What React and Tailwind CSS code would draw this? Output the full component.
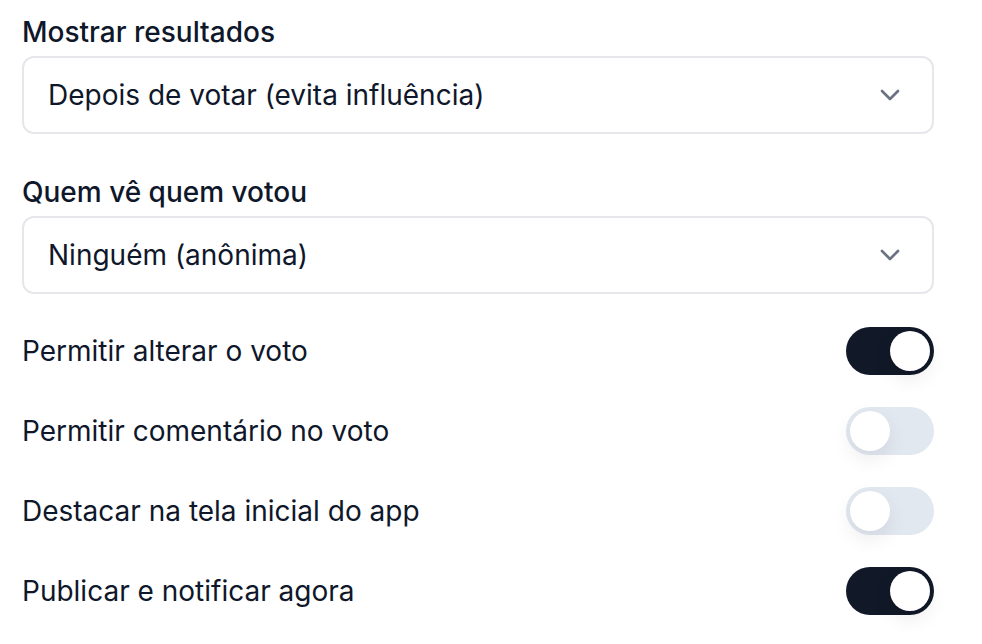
import React from "react";

function Chevron() {
  return (
    <svg width="32" height="32" viewBox="0 0 24 24" fill="none" stroke="#6b7280" strokeWidth="2" strokeLinecap="round" strokeLinejoin="round">
      <path d="m6 9 6 6 6-6" />
    </svg>
  );
}

function Select({ label, value }) {
  return (
    <div className="flex flex-col">
      <div className="text-[28px] leading-[40px] font-medium text-[#0f172a]">{label}</div>
      <div className="mt-[4px] h-[78px] flex items-center justify-between rounded-[12px] border-2 border-[#e5e7eb] pl-[24px] pr-[26px] bg-white">
        <span className="text-[28px] text-[#0f172a]">{value}</span>
        <Chevron />
      </div>
    </div>
  );
}

function Toggle({ on, label }) {
  return (
    <div className="flex items-center justify-between h-[48px]">
      <span className="text-[28px] text-[#0f172a]">{label}</span>
      <div className={"w-[88px] h-[48px] rounded-full p-[4px] flex items-center " + (on ? "bg-[#111827] justify-end" : "bg-[#e2e8f0] justify-start")}>
        <div className="w-[40px] h-[40px] rounded-full bg-white shadow-[0_8px_20px_rgba(0,0,0,0.08)]" />
      </div>
    </div>
  );
}

export default function App() {
  return (
    <div className="w-[982px] h-[644px] bg-white pl-[22px] pr-[48px] pt-[12px]" style={{ fontFamily: "Inter, 'Noto Sans', sans-serif" }}>
      <Select label="Mostrar resultados" value="Depois de votar (evita influência)" />
      <div className="mt-[38px]">
        <Select label="Quem vê quem votou" value="Ninguém (anônima)" />
      </div>
      <div className="mt-[33px] flex flex-col gap-[32px]">
        <Toggle on label="Permitir alterar o voto" />
        <Toggle label="Permitir comentário no voto" />
        <Toggle label="Destacar na tela inicial do app" />
        <Toggle on label="Publicar e notificar agora" />
      </div>
    </div>
  );
}
